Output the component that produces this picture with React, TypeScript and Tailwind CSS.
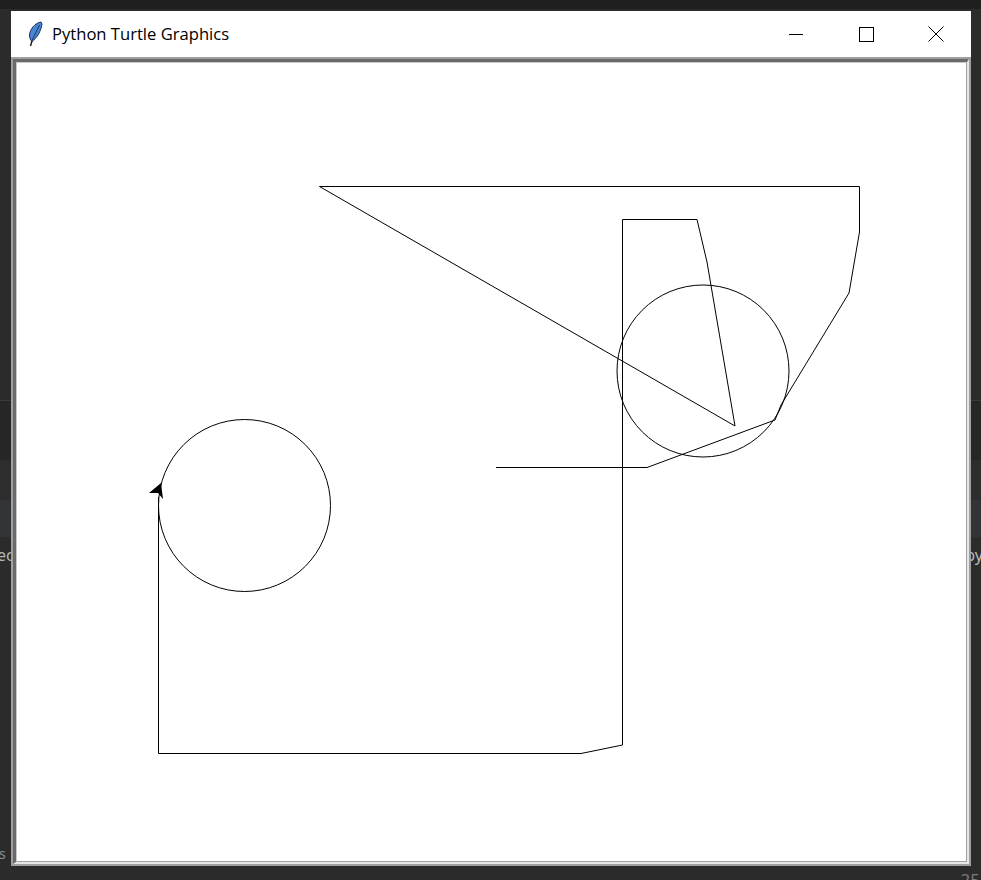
import React from "react";

// turtle path, in page coordinates (svg viewBox is offset to match)
const path = [
  "M319.5 186.5 L859.5 186.5 L859.5 232 L849 293 L781 405 L775 420 L647 467.5 L496 467.5",
  "M319.5 186.5 L735 426 L707 262 L697 219.5 L622.5 219.5 L622.5 745 L581 753.5 L158.5 753.5 L158.5 497",
].join(" ");

function Feather() {
  return (
    <svg width="16" height="26" viewBox="0 0 16 26">
      <path d="M14 1 C8 2 3 8 2.5 14 C2.5 17 3.5 19 5 20.5 C10 17 14 10 15 3 Z" fill="#4a86d6" stroke="#1a2f55" strokeWidth="1" />
      <path d="M12.5 4 L5 19.5" stroke="#1a2f55" strokeWidth="0.9" />
      <path d="M5 20 L3.5 25" stroke="#111" strokeWidth="1.4" />
    </svg>
  );
}

export default function App() {
  return (
    <div className="relative w-[981px] h-[880px] overflow-hidden bg-[#2b2b2b] font-['Liberation_Sans',sans-serif]">
      {/* desktop/app behind the window */}
      <div className="flex flex-col h-full">
        <div className="h-[9px] bg-[#1f1f1f]" />
        <div className="h-[391px] bg-[#2b2b2b]" />
        <div className="h-[60px] bg-[#262627] border-t border-[#3a3a3a]" />
        <div className="h-[40px] bg-[#2d2d2e]" />
        <div className="h-[37px] bg-[#323437]" />
        <div className="flex-1 bg-[#2b2b2b] flex flex-col justify-between">
          <div className="flex justify-between pt-[6px] text-[16px] text-[#b8b8b8] font-['Noto_Sans',sans-serif]">
            <span className="-ml-[3px]">ec</span>
            <span className="-mr-[2px]">py</span>
          </div>
          <div className="flex justify-between items-end text-[14px] text-[#8a9099] font-['Noto_Sans',sans-serif]">
            <span className="-ml-[1px] mb-[16px]">s</span>
            <span className="-mb-[12px] mr-[1px] text-[17px] text-[#7a7a7a]">25</span>
          </div>
        </div>
      </div>

      {/* tk window */}
      <div className="absolute left-[11px] top-[11px] w-[960px] h-[855px] flex flex-col bg-white">
        <div className="h-[46px] flex items-center shrink-0">
          <div className="ml-[16px] mt-[-1px]">
            <Feather />
          </div>
          <span className="ml-[9px] text-[16.6px] text-black font-['Open_Sans',sans-serif] mt-[1px]">
            Python Turtle Graphics
          </span>
          <div className="ml-auto flex items-center h-full">
            <div className="w-[70px] h-full flex items-center justify-center">
              <div className="w-[14px] h-px bg-black mt-[1px]" />
            </div>
            <div className="w-[70px] h-full flex items-center justify-center">
              <div className="w-[15px] h-[15px] border border-black" />
            </div>
            <div className="w-[70px] h-full flex items-center justify-center">
              <svg width="16" height="16" viewBox="0 0 16 16">
                <path d="M0.5 0.5 L15.5 15.5 M15.5 0.5 L0.5 15.5" stroke="#000" strokeWidth="1" />
              </svg>
            </div>
          </div>
        </div>
        <div className="flex-1 flex border-2 border-[#a0a0a0]">
          <div className="flex-1 flex border-t-[3px] border-l-[3px] border-r-[2px] border-b-[2px] border-t-[#6a6a6a] border-l-[#6a6a6a] border-r-[#e6e6e6] border-b-[#e6e6e6]">
            <div className="flex-1 flex border-t border-l border-t-[#c8c8c8] border-l-[#c8c8c8] border-r border-b border-r-[#a0a0a0] border-b-[#a0a0a0] bg-white">
              <svg width="949" height="798" viewBox="17 63 949 798" className="block">
                <path d={path} fill="none" stroke="#000" strokeWidth="1" />
                <circle cx="703" cy="371" r="86" fill="none" stroke="#000" strokeWidth="1" />
                <circle cx="244.5" cy="505.5" r="86" fill="none" stroke="#000" strokeWidth="1" />
                <polygon points="161,483 149,493 158,493 163,499" fill="#000" />
              </svg>
            </div>
          </div>
        </div>
      </div>
    </div>
  );
}
